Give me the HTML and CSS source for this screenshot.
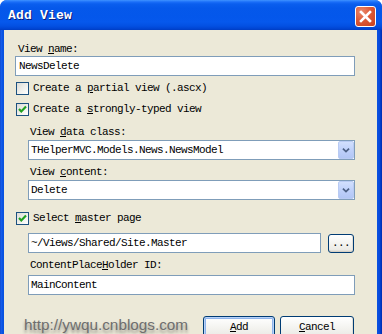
FILE: index.html
```html
<!DOCTYPE html>
<html>
<head>
<meta charset="utf-8">
<title>Add View</title>
<link rel="stylesheet" href="styles.css">
</head>
<body>
<div class="window">
  <div class="titlebar">
    <span class="title">Add View</span>
    <span class="close"><svg width="19" height="19" viewBox="0 0 19 19"><path d="M5 5 L14 14 M14 5 L5 14" stroke="#fff" stroke-width="2.6" stroke-linecap="square" fill="none"/></svg></span>
  </div>
  <div class="panel">
    <div class="label">View <u>n</u>ame:</div>
    <div class="field first">NewsDelete</div>
    <div class="check c1"><span class="box"></span><span>Create a <u>p</u>artial view (.ascx)</span></div>
    <div class="check c2"><span class="box"><svg width="11" height="11" viewBox="0 0 11 11"><path d="M2 5 L4.3 7.4 L9 2.6" stroke="#21A121" stroke-width="2.2" fill="none"/></svg></span><span>Create a <u>s</u>trongly-typed view</span></div>
    <div class="group">
      <div class="label sub l-data">View <u>d</u>ata class:</div>
      <div class="select"><span class="value">THelperMVC.Models.News.NewsModel</span><span class="drop"><svg width="16" height="18" viewBox="0 0 16 18"><path d="M4.5 7.5 L8 10.8 L11.5 7.5" stroke="#4D6185" stroke-width="2" fill="none"/></svg></span></div>
      <div class="label sub l-content">View <u>c</u>ontent:</div>
      <div class="select"><span class="value">Delete</span><span class="drop"><svg width="16" height="18" viewBox="0 0 16 18"><path d="M4.5 7.5 L8 10.8 L11.5 7.5" stroke="#4D6185" stroke-width="2" fill="none"/></svg></span></div>
    </div>
    <div class="check c3"><span class="box"><svg width="11" height="11" viewBox="0 0 11 11"><path d="M2 5 L4.3 7.4 L9 2.6" stroke="#21A121" stroke-width="2.2" fill="none"/></svg></span><span>Select <u>m</u>aster page</span></div>
    <div class="group">
      <div class="master-row">
        <div class="field master">~/Views/Shared/Site.Master</div>
        <button class="btn browse">...</button>
      </div>
      <div class="label sub l-cph">ContentPlace<u>H</u>older ID:</div>
      <div class="field">MainContent</div>
    </div>
    <div class="bottom">
      <span class="watermark">http://ywqu.cnblogs.com</span>
      <div class="buttons">
        <button class="btn main default"><u>A</u>dd</button>
        <button class="btn main cancel"><u>C</u>ancel</button>
      </div>
    </div>
  </div>
</div>
</body>
</html>
```

FILE: styles.css
```css
* {
  box-sizing: border-box;
  margin: 0;
  padding: 0;
}

html, body {
  width: 382px;
  height: 334px;
  overflow: hidden;
  background: #ffffff;
}

body {
  font-family: "Liberation Mono", "DejaVu Sans Mono", monospace;
  font-size: 11px;
  letter-spacing: -0.6px;
  color: #000;
}

u {
  text-decoration: underline;
  text-underline-offset: 1px;
}

.window {
  width: 382px;
  height: 360px;
  display: flex;
  flex-direction: column;
  border-radius: 7px 7px 0 0;
  overflow: hidden;
  background: linear-gradient(to right, #0a3fc4 0, #1c62ec 1px, #0b55e6 2px, #0852e0 3px, #0852e0 377px, #0a4ee0 378px, #0648d8 380px, #0030b8 381px);
}

.titlebar {
  height: 30px;
  flex: none;
  display: flex;
  align-items: center;
  justify-content: space-between;
  padding: 0 6px 0 8px;
  background: linear-gradient(#3f93ff 0, #1a6ef8 2px, #0a5eee 4px, #0558ea 8px, #0457eb 16px, #0658ec 22px, #0350e2 26px, #0043d0 29px, #003cc0 30px);
}

.title {
  font-family: "Liberation Mono", monospace;
  font-weight: bold;
  font-size: 13px;
  letter-spacing: 0.2px;
  color: #fff;
  text-shadow: 1px 1px 0 #0a1c78;
  margin-top: 1px;
}

.close {
  width: 21px;
  height: 21px;
  margin-top: 2px;
  border: 1px solid #fff;
  border-radius: 3px;
  background: radial-gradient(circle at 30% 25%, #ea8a6c 0, #dd5a38 45%, #c8401c 100%);
  display: flex;
  align-items: center;
  justify-content: center;
}

.panel {
  flex: 1;
  margin: 0 5px 0 4px;
  background: #ece9d8;
  padding: 13px 0 0 11px;
  display: flex;
  flex-direction: column;
  width: 373px;
}

.label {
  line-height: 13px;
  height: 13px;
  padding-left: 3px;
  white-space: nowrap;
}

.field {
  width: 340px;
  height: 20px;
  border: 1px solid #7f9db9;
  background: #fff;
  line-height: 18px;
  padding-left: 3px;
  white-space: nowrap;
}

.check {
  display: flex;
  align-items: center;
  gap: 4px;
  height: 13px;
  line-height: 13px;
  padding-left: 1px;
  white-space: nowrap;
}

.box {
  width: 13px;
  height: 13px;
  border: 1px solid #1c5180;
  background: linear-gradient(135deg, #dcdcd7 0, #f2f2ee 60%, #ffffff 100%);
  display: flex;
  align-items: center;
  justify-content: center;
  flex: none;
}

.c1 { margin-top: 6px; }
.c2 { margin-top: 8px; }
.c3 { margin-top: 12px; }

.group {
  padding-left: 13px;
  display: flex;
  flex-direction: column;
}

.label.sub { padding-left: 2px; }
.l-data { margin-top: 10px; }
.l-content { margin-top: 6px; }
.l-cph { margin-top: 6px; }

.group .field { width: 327px; padding-left: 2px; }

.select {
  width: 327px;
  height: 20px;
  margin-top: 1px;
  border: 1px solid #7f9db9;
  background: #fff;
  display: flex;
  align-items: stretch;
  justify-content: space-between;
}

.select .value {
  line-height: 18px;
  padding-left: 2px;
  white-space: nowrap;
}

.drop {
  width: 16px;
  flex: none;
  border: 1px solid #b9cbf3;
  border-radius: 2px;
  background: linear-gradient(#d2e0fd, #bfd1fa 50%, #b2c6f5);
  display: flex;
  align-items: center;
  justify-content: center;
}

.drop svg { display: block; }

.master-row {
  margin-top: 8px;
  display: flex;
  gap: 7px;
  align-items: flex-start;
}

.group .field.master { width: 293px; }

.l-cph + .field { margin-top: 3px; }

.btn {
  font-family: "Liberation Mono", monospace;
  font-size: 11px;
  letter-spacing: -0.6px;
  color: #000;
  border: 1px solid #003c74;
  border-radius: 3px;
  background: linear-gradient(#ffffff 0, #f6f6f3 40%, #ecebe6 85%, #d8d5cc 100%);
  box-shadow: inset 0 -1px 0 #d6d0c5, inset -1px 0 0 #e2ded4;
}

.browse {
  width: 26px;
  height: 19px;
  margin-top: 1px;
  line-height: 15px;
}

.bottom {
  margin-top: 21px;
  display: flex;
  justify-content: space-between;
  align-items: flex-start;
  width: 339px;
}

.watermark {
  font-family: "Liberation Sans", Arial, sans-serif;
  font-size: 15.3px;
  letter-spacing: 0;
  color: #6e6e6e;
  text-shadow: 0 3px 3px rgba(40, 40, 40, 0.45);
  margin-left: 9px;
  line-height: 18px;
}

.buttons {
  display: flex;
  gap: 5px;
}

.btn.main {
  width: 72px;
  height: 23px;
  line-height: 19px;
}

.btn.cancel {
  width: 74px;
}

.btn.default {
  box-shadow: inset 0 0 0 1px #b8d2f8, inset 0 0 0 2px #8fb4ea;
}
```
